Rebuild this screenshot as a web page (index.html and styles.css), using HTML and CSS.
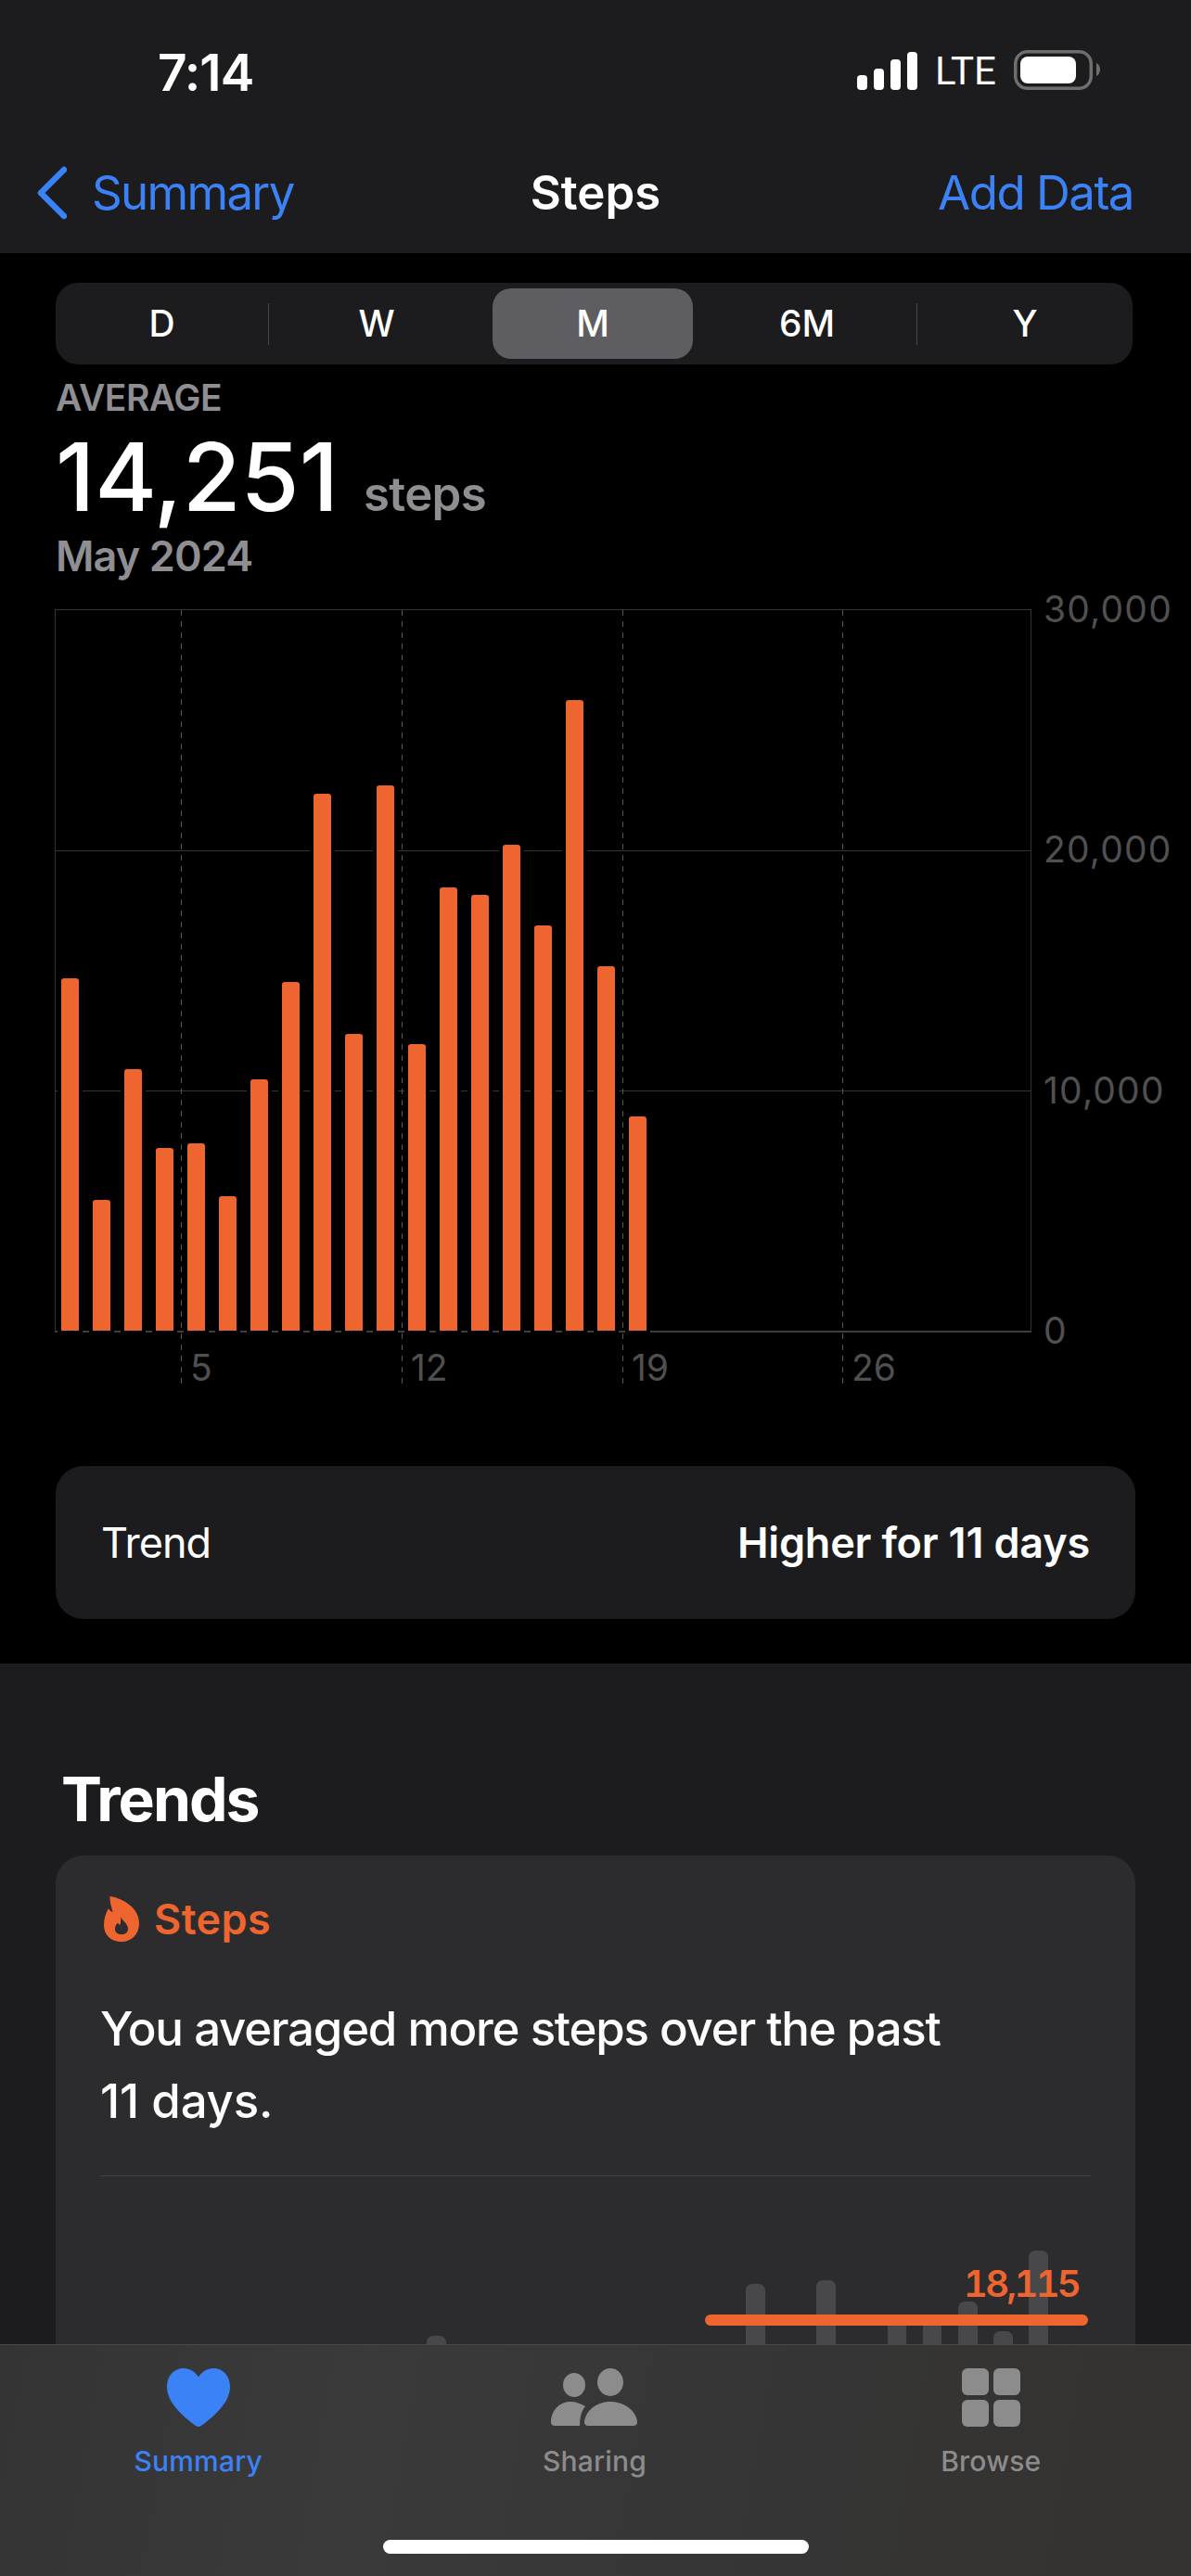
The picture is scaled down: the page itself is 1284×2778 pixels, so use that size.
FILE: index.html
```html
<!DOCTYPE html>
<html>
<head>
  <title>Steps</title>
  <link rel="stylesheet" href="styles.css">
</head>
<body>

  <header class="top-bar">
    <div class="status-bar">
      <span class="time">7:14</span>
      <div class="status-icons">
        <svg class="signal" width="65" height="41" viewBox="0 0 65 41">
          <rect x="0" y="25" width="11" height="16" rx="4"/>
          <rect x="18" y="18" width="11" height="23" rx="4"/>
          <rect x="36" y="8" width="11" height="33" rx="4"/>
          <rect x="54" y="0" width="11" height="41" rx="4"/>
        </svg>
        <span class="lte">LTE</span>
        <svg class="battery" width="93" height="43" viewBox="0 0 93 43">
          <rect x="1.75" y="1.75" width="81.5" height="39.5" rx="13" fill="none" stroke="#6e6e6e" stroke-width="3.5"/>
          <rect x="7" y="7" width="60" height="29" rx="8" fill="#fff"/>
          <path d="M89 14 C91.5 15 93 18 93 21 C93 24 91.5 27 89 28Z" fill="#6e6e6e"/>
        </svg>
      </div>
    </div>
    <nav class="nav-row">
      <a class="nav-back">
        <svg width="34" height="58" viewBox="0 0 34 58">
          <path d="M31 4 L6 29 L31 54" fill="none" stroke="#3b82f6" stroke-width="6.5" stroke-linecap="round" stroke-linejoin="round"/>
        </svg>
        <span>Summary</span>
      </a>
      <span class="nav-title">Steps</span>
      <a class="nav-action">Add Data</a>
    </nav>
  </header>

  <main class="content">
    <section class="range-section">
      <div class="segments">
        <span class="seg seg-d">D</span>
        <i class="seg-line"></i>
        <span class="seg seg-w">W</span>
        <span class="seg seg-m">M</span>
        <span class="seg seg-6m">6M</span>
        <i class="seg-line"></i>
        <span class="seg seg-y">Y</span>
      </div>

      <div class="avg-label">AVERAGE</div>
      <div class="avg-value"><span class="avg-num">14,251</span> <span class="avg-unit">steps</span></div>
      <div class="avg-date">May 2024</div>

      <div class="chart">
        <div class="plot">
          <i class="grid-line grid-20"></i>
          <i class="grid-line grid-10"></i>
          <div class="tick tick-5"><span>5</span></div>
          <div class="tick tick-12"><span>12</span></div>
          <div class="tick tick-19"><span>19</span></div>
          <div class="tick tick-26"><span>26</span></div>
          <div class="bars">
            <i class="bar" style="height:48.97%"></i>
            <i class="bar" style="height:18.12%"></i>
            <i class="bar" style="height:36.25%"></i>
            <i class="bar" style="height:25.32%"></i>
            <i class="bar" style="height:25.96%"></i>
            <i class="bar" style="height:18.64%"></i>
            <i class="bar" style="height:34.83%"></i>
            <i class="bar" style="height:48.33%"></i>
            <i class="bar" style="height:74.55%"></i>
            <i class="bar" style="height:41.13%"></i>
            <i class="bar" style="height:75.71%"></i>
            <i class="bar" style="height:39.72%"></i>
            <i class="bar" style="height:61.57%"></i>
            <i class="bar" style="height:60.54%"></i>
            <i class="bar" style="height:67.48%"></i>
            <i class="bar" style="height:56.30%"></i>
            <i class="bar" style="height:87.53%"></i>
            <i class="bar" style="height:50.64%"></i>
            <i class="bar" style="height:29.69%"></i>
          </div>
        </div>
        <div class="y-axis">
          <span>30,000</span>
          <span>20,000</span>
          <span>10,000</span>
          <span>0</span>
        </div>
      </div>

      <div class="trend-row">
        <span class="trend-name">Trend</span>
        <span class="trend-value">Higher for 11 days</span>
      </div>
    </section>

    <section class="trends-section">
      <h2>Trends</h2>
      <div class="trend-card">
        <div class="card-head">
          <svg width="38" height="49" viewBox="0 0 38 49">
            <path fill-rule="evenodd" fill="#ee6530" d="M6.5 0 C20 2 38 12 38 29 C38 41 30 49 19 49 C8 49 0 42 0 31 C0 24 2 18 5 13 C6 15 7.5 16.5 9.5 17 C8 11 6 5 6.5 0Z M18.5 22 C19 26 26 29 26 35 C26 39 23 41 19 41 C15 41 12 39 12 35 C12 32 13.5 30 15 28.5 C15.5 30 16.5 31 17.5 30.5 C18.5 28 18 25 18.5 22Z"/>
          </svg>
          <span>Steps</span>
        </div>
        <p class="card-text">You averaged more steps over the past<br><span class="card-days">11 days.</span></p>
        <div class="card-line"></div>
        <div class="mini-chart">
          <i class="mini-bar" style="height:9px"></i>
          <i class="mini-bar" style="height:0"></i>
          <i class="mini-bar" style="height:0"></i>
          <i class="mini-bar" style="height:0"></i>
          <i class="mini-bar" style="height:0"></i>
          <i class="mini-bar" style="height:0"></i>
          <i class="mini-bar" style="height:0"></i>
          <i class="mini-bar" style="height:0"></i>
          <i class="mini-bar" style="height:0"></i>
          <i class="mini-bar" style="height:65px"></i>
          <i class="mini-bar" style="height:0"></i>
          <i class="mini-bar" style="height:69px"></i>
          <i class="mini-bar" style="height:0"></i>
          <i class="mini-bar" style="height:30px"></i>
          <i class="mini-bar" style="height:30px"></i>
          <i class="mini-bar" style="height:46px"></i>
          <i class="mini-bar" style="height:14px"></i>
          <i class="mini-bar" style="height:101px"></i>
          <span class="mini-label">18,115</span>
          <i class="mini-avg"></i>
        </div>
      </div>
    </section>
  </main>

  <footer class="tab-bar">
    <div class="tabs">
      <div class="tab tab-active">
        <svg width="68" height="63" viewBox="0 0 68 63">
          <path fill="#3b82f6" d="M34 9.5 C30 3.5 24.5 0 18 0 C7.5 0 0 8 0 20 C0 36 15 50 31 62 C33 63.3 35 63.3 37 62 C53 50 68 36 68 20 C68 8 60.5 0 50 0 C43.5 0 38 3.5 34 9.5Z"/>
        </svg>
        <span>Summary</span>
      </div>
      <div class="tab">
        <svg width="93" height="63" viewBox="0 0 93 63">
          <ellipse cx="25" cy="18" rx="12" ry="13" fill="#8c8c8c"/>
          <ellipse cx="64" cy="15" rx="14" ry="15" fill="#8c8c8c"/>
          <path fill="#8c8c8c" d="M0 58 C0 46 9 36 21 36 C27 36 32 38 37 41 C33 46 31 52 31 62 L4 62 C1.5 62 0 60.5 0 58Z"/>
          <path fill="#8c8c8c" d="M36 58 C37 46 49 36 64 36 C79 36 92 46 93 58 C93 60.5 91.5 62 89 62 L40 62 C37.5 62 36 60.5 36 58Z"/>
        </svg>
        <span>Sharing</span>
      </div>
      <div class="tab">
        <svg width="63" height="63" viewBox="0 0 63 63">
          <rect x="0" y="0" width="29" height="29" rx="6" fill="#8c8c8c"/>
          <rect x="34" y="0" width="29" height="29" rx="6" fill="#8c8c8c"/>
          <rect x="0" y="34" width="29" height="29" rx="6" fill="#8c8c8c"/>
          <rect x="34" y="34" width="29" height="29" rx="6" fill="#8c8c8c"/>
        </svg>
        <span>Browse</span>
      </div>
    </div>
    <div class="home-bar"></div>
  </footer>

</body>
</html>
```

FILE: styles.css
```css
* {
  box-sizing: border-box;
}

html, body {
  height: 100%;
}

body {
  margin: 0;
  height: 2778px;
  display: flex;
  flex-direction: column;
  overflow: hidden;
  background-color: #000;
  color: #fff;
  font-family: Inter, "Liberation Sans", sans-serif;
}

/* top bar */

.top-bar {
  flex: none;
  height: 273px;
  padding-top: 50px;
  background-color: #1c1c1e;
}

.status-bar {
  display: flex;
  justify-content: space-between;
  align-items: center;
  height: 50px;
  padding: 0 98px 0 170px;
}

.time {
  margin-top: 6px;
  font-size: 55px;
  font-weight: 600;
  line-height: 50px;
  letter-spacing: -1px;
}

.status-icons {
  display: flex;
  align-items: flex-end;
}

.signal {
  fill: #fff;
  margin-right: 19px;
}

.lte {
  font-family: "Liberation Sans Narrow", Roboto, sans-serif;
  font-size: 42px;
  line-height: 41px;
  margin-right: 19px;
}

.nav-row {
  display: grid;
  grid-template-columns: 1fr auto 1fr;
  align-items: center;
  height: 64px;
  margin-top: 76px;
  padding: 0 62px;
  font-size: 51px;
  line-height: 64px;
}

.nav-back {
  display: flex;
  align-items: center;
  gap: 27px;
  margin-left: -24px;
  letter-spacing: -1.7px;
  color: #3b82f6;
}

.nav-back svg {
  flex: none;
}

.nav-title {
  font-weight: 600;
}

.nav-action {
  text-align: right;
  letter-spacing: -1.5px;
  color: #3b82f6;
}

.content {
  flex: 1;
  min-height: 0;
  overflow: hidden;
}

/* range section */

.range-section {
  background-color: #000;
  padding: 32px 60px 48px;
}

.segments {
  display: flex;
  align-items: center;
  width: 1161px;
  height: 88px;
  border-radius: 24px;
  background-color: #1c1c1e;
}

.seg {
  font-size: 39px;
  font-weight: 500;
  line-height: 76px;
  text-align: center;
}

.seg-d { width: 229px; }
.seg-w { width: 232px; }
.seg-y { width: 232px; }

.seg-m {
  width: 216px;
  margin-left: 9px;
  border-radius: 20px;
  background-color: #5e5e62;
}

.seg-6m {
  width: 230px;
  margin: 0 3px 0 8px;
}

.seg-line {
  flex: none;
  width: 1px;
  height: 45px;
  background-color: #48484a;
}

.avg-label {
  margin-top: 21px;
  font-size: 39px;
  font-weight: 600;
  line-height: 30px;
  letter-spacing: -0.5px;
  color: #8e8e93;
}

.avg-value {
  display: flex;
  align-items: baseline;
  gap: 27px;
  margin-top: 30px;
  height: 80px;
  line-height: 80px;
}

.avg-num {
  font-size: 102px;
  font-weight: 500;
}

.avg-unit {
  font-size: 51px;
  font-weight: 600;
  letter-spacing: -0.7px;
  color: #8e8e93;
}

.avg-date {
  margin-top: 28px;
  font-size: 45px;
  font-weight: 600;
  line-height: 36px;
  letter-spacing: -0.9px;
  color: #8e8e93;
}

/* chart */

.chart {
  display: flex;
  margin: 39px 0 131px -1px;
}

.plot {
  position: relative;
  flex: none;
  width: 1053px;
  height: 780px;
  border: 1px solid #343434;
  border-bottom: 2px solid #3e3e3e;
}

.grid-line {
  position: absolute;
  left: 0;
  right: 0;
  height: 1px;
  background-color: #343434;
}

.grid-20 { top: 259px; }
.grid-10 { top: 518px; }

.tick {
  position: absolute;
  top: 0;
  width: 1px;
  height: 839px;
  background: repeating-linear-gradient(to bottom, #565656 0, #565656 6px, transparent 6px, transparent 12px);
}

.tick span {
  position: absolute;
  left: 10px;
  bottom: 7px;
  font-size: 39px;
  line-height: 30px;
  color: #505050;
}

.tick-5 { left: 135px; }
.tick-12 { left: 373px; }
.tick-19 { left: 611px; }
.tick-26 { left: 848px; }

.bars {
  position: absolute;
  left: 6px;
  top: 0;
  bottom: 0;
  display: flex;
  align-items: flex-end;
  gap: 15px;
}

.bar {
  width: 19px;
  border-radius: 3px 3px 0 0;
  background-color: #ee6530;
  box-shadow: 0 0 0 4px #000;
}

.y-axis {
  display: flex;
  flex-direction: column;
  justify-content: space-between;
  height: 808px;
  margin: -15px 0 0 13px;
  font-size: 39px;
  line-height: 30px;
  letter-spacing: 1.2px;
  color: #505050;
}

.trend-row {
  display: flex;
  justify-content: space-between;
  align-items: center;
  width: 1164px;
  height: 165px;
  padding: 0 49px;
  border-radius: 30px;
  background-color: #1c1c1e;
  font-size: 45px;
}

.trend-name {
  letter-spacing: -1px;
}

.trend-value {
  font-weight: 600;
  letter-spacing: -0.2px;
}

/* trends section */

.trends-section {
  background-color: #1c1c1e;
  padding: 106px 60px 0;
}

.trends-section h2 {
  margin: 0 0 21px 6px;
  font-size: 66px;
  font-weight: 700;
  line-height: 80px;
  letter-spacing: -2px;
}

.trend-card {
  width: 1164px;
  height: 700px;
  padding: 44px 48px 0;
  border-radius: 30px;
  background-color: #2c2c2e;
}

.card-head {
  display: flex;
  align-items: center;
  gap: 16px;
  margin-left: 4px;
  height: 49px;
  font-size: 45px;
  font-weight: 600;
  letter-spacing: 0.4px;
  color: #ee6530;
}

.card-text {
  margin: 55px 0 41px;
  font-size: 51px;
  font-weight: 500;
  line-height: 78px;
  letter-spacing: -1.25px;
}

.card-days {
  letter-spacing: -0.2px;
}

.card-line {
  height: 1px;
  background-color: #444446;
}

.mini-chart {
  position: relative;
  display: flex;
  justify-content: flex-end;
  align-items: flex-end;
  gap: 17.6px;
  height: 181px;
  padding-right: 46px;
}

.mini-bar {
  width: 20.6px;
  border-radius: 7px 7px 0 0;
  background-color: #48484a;
}

.mini-avg {
  position: absolute;
  right: 3px;
  top: 149px;
  width: 413px;
  height: 12px;
  border-radius: 6px;
  background-color: #ee6530;
}

.mini-label {
  position: absolute;
  right: 13px;
  top: 98px;
  font-size: 40px;
  font-weight: 600;
  line-height: 36px;
  letter-spacing: -2.7px;
  font-variant-numeric: tabular-nums;
  color: #ee6530;
}

/* tab bar */

.tab-bar {
  flex: none;
  height: 250px;
  border-top: 1px solid #4a4a4c;
  background: linear-gradient(100deg, #343434, #3a3a3a 30%, #363636 60%, #343230);
}

.tabs {
  display: grid;
  grid-template-columns: repeat(3, 1fr);
  padding: 25px 2px 0 0;
}

.tab {
  display: flex;
  flex-direction: column;
  align-items: center;
  gap: 19px;
  font-size: 30px;
  font-weight: 500;
  line-height: 36px;
  letter-spacing: 0.2px;
  color: #8c8c8c;
}

.tab-active {
  color: #3b82f6;
}

.home-bar {
  width: 459px;
  height: 15px;
  margin: 67px auto 0;
  border-radius: 8px;
  background-color: #fff;
}
```
